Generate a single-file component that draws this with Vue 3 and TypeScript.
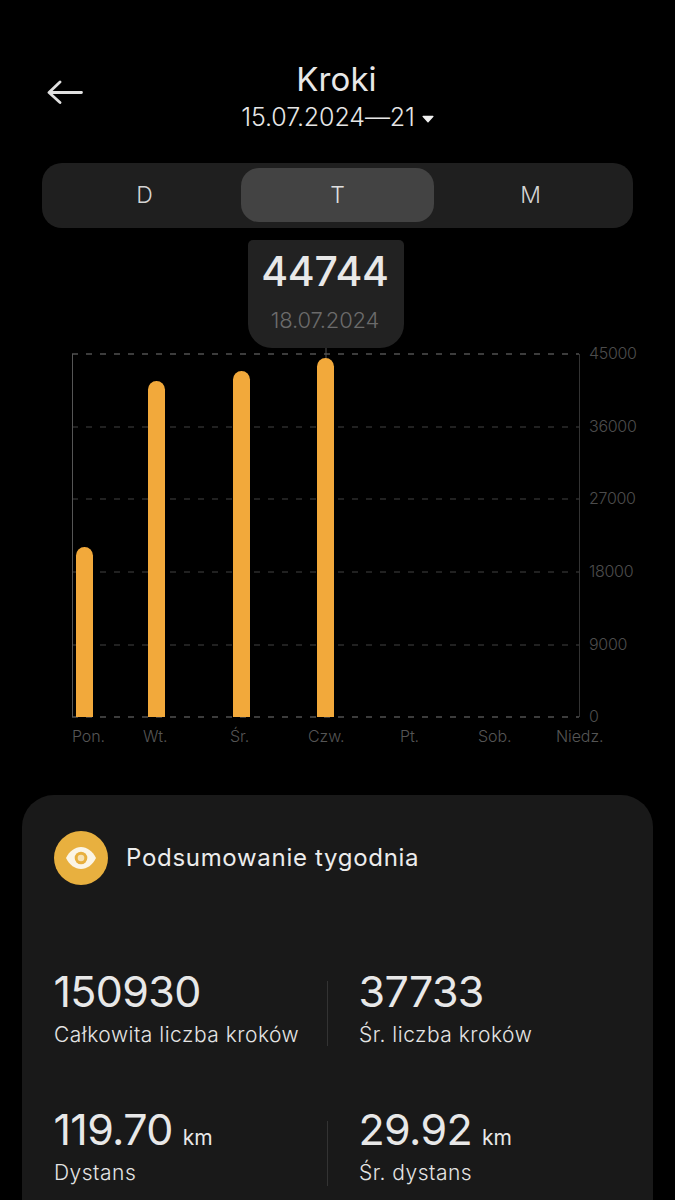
<script setup lang="ts">
const tabs = [
  { label: 'D', active: false },
  { label: 'T', active: true },
  { label: 'M', active: false },
]
const base = 477
const grid = [
  { y: 114, label: '45000' },
  { y: 187, label: '36000' },
  { y: 259, label: '27000' },
  { y: 332, label: '18000' },
  { y: 405, label: '9000' },
  { y: 477, label: '0' },
]
const bars = [
  { x: 76, top: 307 },
  { x: 148, top: 141 },
  { x: 233, top: 131 },
  { x: 317, top: 118 },
]
const days = [
  { x: 72, label: 'Pon.' },
  { x: 143, label: 'Wt.' },
  { x: 230, label: 'Śr.' },
  { x: 308, label: 'Czw.' },
  { x: 400, label: 'Pt.' },
  { x: 478, label: 'Sob.' },
  { x: 556, label: 'Niedz.' },
]
const barPath = (x: number, top: number) =>
  `M${x} ${base}V${top + 8.5}a8.5 8.5 0 0 1 17 0V${base}Z`
const stats = [
  [
    { value: '150930', unit: '', label: 'Całkowita liczba kroków' },
    { value: '37733', unit: '', label: 'Śr. liczba kroków' },
  ],
  [
    { value: '119.70', unit: 'km', label: 'Dystans' },
    { value: '29.92', unit: 'km', label: 'Śr. dystans' },
  ],
]
</script>

<template>
  <main class="page">
    <header class="header">
      <button class="back" aria-label="Wstecz">
        <svg width="36" height="24" viewBox="0 0 36 24" fill="none" stroke="#e0e0e0" stroke-width="2.800" stroke-linecap="round" stroke-linejoin="round">
          <path d="M34.500 12.500H3M13 2 2 12.500 13 22.500" />
        </svg>
      </button>
      <div class="heading">
        <h1 class="title">Kroki</h1>
        <div class="range">
          <span>15.07.2024—21</span>
          <svg width="12" height="8" viewBox="0 0 12 8"><path d="M1 .8h10a.6.6 0 0 1 .45 1L6.5 7.2a.7.7 0 0 1-1 0L.55 1.8A.6.6 0 0 1 1 .8Z" fill="#f0f0f0" /></svg>
        </div>
      </div>
    </header>

    <nav class="tabs">
      <div v-for="t in tabs" :key="t.label" class="tab" :class="{ active: t.active }">{{ t.label }}</div>
    </nav>

    <section class="chart">
      <div class="tooltip">
        <div class="tip-value">44744</div>
        <div class="tip-date">18.07.2024</div>
      </div>
      <svg class="plot" width="675" height="510" viewBox="0 0 675 510">
        <line v-for="g in grid" :key="g.y" x1="72" x2="579" :y1="g.y" :y2="g.y" class="grid-line" :class="{ strong: g.y === base || g.y === 114 }" />
        <line x1="72.5" x2="72.5" y1="114" :y2="base" class="axis" />
        <line x1="579.5" x2="579.5" y1="114" :y2="base" class="axis dim" />
        <line x1="326" x2="326" y1="108" y2="120" class="pointer" />
        <path v-for="b in bars" :key="b.x" :d="barPath(b.x, b.top)" fill="#f2a93b" />
        <text v-for="g in grid" :key="g.label" x="589" :y="g.y + 5" class="y-label">{{ g.label }}</text>
        <text v-for="d in days" :key="d.label" :x="d.x" y="502" class="x-label">{{ d.label }}</text>
      </svg>
    </section>

    <section class="card">
      <div class="card-head">
        <div class="icon">
          <svg width="32" height="24" viewBox="0 0 32 24">
            <path d="M1 12C4.500 5 10 1 16 1s11.500 4 15 11c-3.500 7-9 11-15 11S4.500 19 1 12Z" fill="#fbf5e6" />
            <circle cx="16" cy="12" r="6.300" fill="#e8b03f" />
            <circle cx="16" cy="12" r="3.300" fill="#f6e2b4" />
          </svg>
        </div>
        <h2 class="card-title">Podsumowanie tygodnia</h2>
      </div>
      <div class="rows">
        <div v-for="(row, i) in stats" :key="i" class="row">
          <div v-for="(s, j) in row" :key="s.label" class="stat" :class="{ right: j === 1 }">
            <div class="value">{{ s.value }}<span v-if="s.unit" class="unit">{{ s.unit }}</span></div>
            <div class="label">{{ s.label }}</div>
          </div>
        </div>
      </div>
    </section>
  </main>
</template>

<style>
html, body { margin: 0; background: #000; }
</style>

<style scoped>
.page {
  width: 675px;
  height: 1200px;
  overflow: hidden;
  background: #000;
  color: #e8e8e8;
  font-family: Inter, "Liberation Sans", sans-serif;
}
.header {
  display: grid;
  grid-template-columns: 1fr auto 1fr;
  align-items: center;
  padding: 60px 0 0;
  height: 163px;
  box-sizing: border-box;
  align-content: start;
}
.back {
  justify-self: start;
  margin: 0 0 10px 47px;
  padding: 0;
  border: 0;
  background: none;
  line-height: 0;
}
.heading { display: flex; flex-direction: column; align-items: center; }
.title { margin: 0 0 0 -2px; font-size: 33px; line-height: 38px; font-weight: 400; letter-spacing: 0.1px; color: #e8e8e8; }
.range { display: flex; align-items: center; gap: 7px; margin-top: 3px; font-size: 25px; line-height: 33px; font-weight: 300; letter-spacing: -0.1px; color: #e6e6e6; }
.range svg { margin-top: 2px; }
.tabs {
  display: grid;
  grid-template-columns: 193px 193px 193px;
  margin: 0 42px;
  padding: 5px 6px;
  height: 65px;
  box-sizing: border-box;
  background: #1f1f1f;
  border-radius: 20px;
}
.tab { display: flex; align-items: center; justify-content: center; font-size: 23px; font-weight: 300; color: #d4d4d4; border-radius: 18px; height: 54px; }
.tab.active { background: #434343; color: #e0e0e0; }
.chart { position: relative; height: 530px; padding-top: 12px; box-sizing: content-box; }
.tooltip {
  position: absolute;
  top: 12px;
  left: 248px;
  width: 154px;
  height: 108px;
  padding-right: 2px;
  background: #222;
  border-radius: 5px 5px 24px 24px;
  text-align: center;
}
.tip-value { margin-top: 6px; font-size: 41px; line-height: 50px; font-weight: 500; color: #e8e8e8; letter-spacing: -0.2px; }
.tip-date { margin-top: 10px; font-size: 22px; line-height: 28px; font-weight: 300; color: #6b6b6b; letter-spacing: -0.2px; }
.plot { display: block; }
.grid-line { stroke: #2c2c2c; stroke-width: 1.5; stroke-dasharray: 6 8; }
.grid-line.strong { stroke: #505050; }
.axis { stroke: #555; stroke-width: 1; }
.axis.dim { stroke: #333; }
.pointer { stroke: #555; stroke-width: 1; }
.y-label { font-size: 16px; font-weight: 300; fill: #4c4c4c; letter-spacing: -0.3px; }
.x-label { font-size: 16px; font-weight: 300; fill: #555; letter-spacing: -0.1px; }
.card {
  margin: 25px 22px 0;
  height: 500px;
  padding: 36px 32px 0;
  box-sizing: border-box;
  background: #191919;
  border-radius: 32px;
}
.card-head { display: flex; align-items: center; gap: 18px; }
.icon { width: 54px; height: 54px; border-radius: 50%; background: #e8b03f; display: flex; align-items: center; justify-content: center; }
.card-title { margin: 0; font-size: 24px; line-height: 32px; font-weight: 400; color: #ececec; letter-spacing: 0.7px; }
.rows { display: flex; flex-direction: column; gap: 61px; margin-top: 87px; }
.row { display: grid; grid-template-columns: 305px 1fr; }
.stat { position: relative; }
.stat.right::before {
  content: '';
  position: absolute;
  left: -32px;
  top: 9px;
  height: 65px;
  width: 1px;
  background: #333;
}
.row:last-child .stat.right::before { top: 11px; }
.value { font-size: 43px; line-height: 50px; color: #e8e8e8; margin-top: -6px; margin-left: -0.5px; letter-spacing: -0.65px; }
.unit { font-size: 21px; line-height: 1; margin-left: 10px; letter-spacing: 0; }
.label { margin-top: 5px; font-size: 21px; line-height: 28px; font-weight: 300; color: #e4e4e4; letter-spacing: 0.5px; }
</style>
